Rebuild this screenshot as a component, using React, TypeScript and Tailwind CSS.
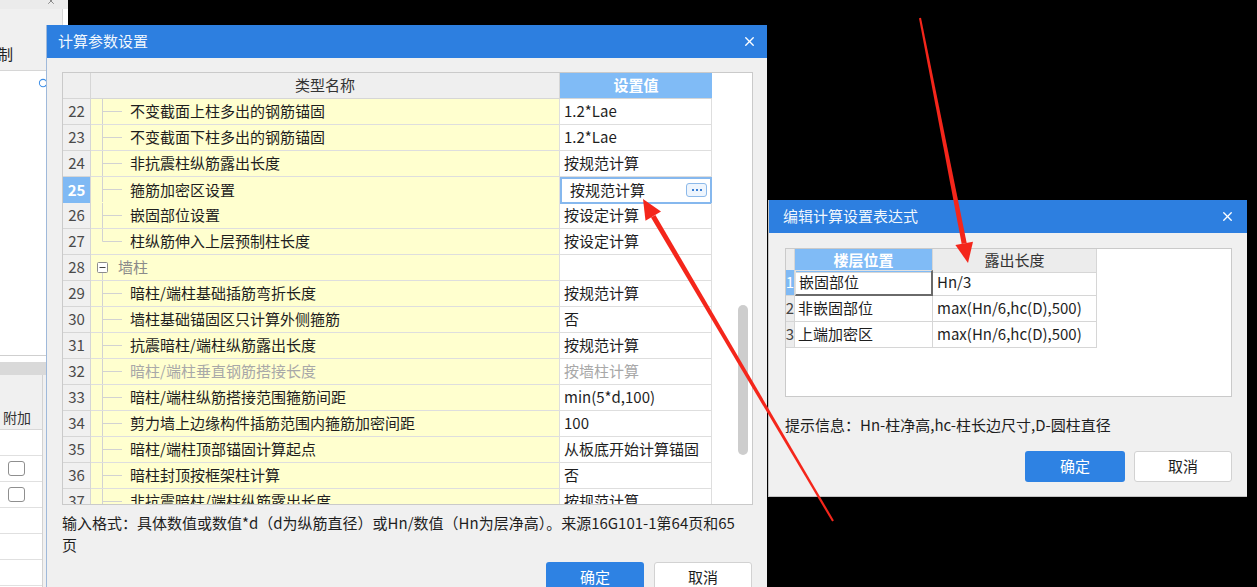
import { X, Search } from 'lucide-react';

type Row = {
  no: number;
  name: string;
  value: string;
  tree: 'mid' | 'end' | 'group';
  active?: boolean;
  muted?: boolean;
};

const params: Row[] = [
  { no: 22, name: '不变截面上柱多出的钢筋锚固', value: '1.2*Lae', tree: 'mid' },
  { no: 23, name: '不变截面下柱多出的钢筋锚固', value: '1.2*Lae', tree: 'mid' },
  { no: 24, name: '非抗震柱纵筋露出长度', value: '按规范计算', tree: 'mid' },
  { no: 25, name: '箍筋加密区设置', value: '按规范计算', tree: 'mid', active: true },
  { no: 26, name: '嵌固部位设置', value: '按设定计算', tree: 'mid' },
  { no: 27, name: '柱纵筋伸入上层预制柱长度', value: '按设定计算', tree: 'end' },
  { no: 28, name: '墙柱', value: '', tree: 'group' },
  { no: 29, name: '暗柱/端柱基础插筋弯折长度', value: '按规范计算', tree: 'mid' },
  { no: 30, name: '墙柱基础锚固区只计算外侧箍筋', value: '否', tree: 'mid' },
  { no: 31, name: '抗震暗柱/端柱纵筋露出长度', value: '按规范计算', tree: 'mid' },
  { no: 32, name: '暗柱/端柱垂直钢筋搭接长度', value: '按墙柱计算', tree: 'mid', muted: true },
  { no: 33, name: '暗柱/端柱纵筋搭接范围箍筋间距', value: 'min(5*d,100)', tree: 'mid' },
  { no: 34, name: '剪力墙上边缘构件插筋范围内箍筋加密间距', value: '100', tree: 'mid' },
  { no: 35, name: '暗柱/端柱顶部锚固计算起点', value: '从板底开始计算锚固', tree: 'mid' },
  { no: 36, name: '暗柱封顶按框架柱计算', value: '否', tree: 'mid' },
  { no: 37, name: '非抗震暗柱/端柱纵筋露出长度', value: '按规范计算', tree: 'mid' },
];

const floors = [
  { no: 1, pos: '嵌固部位', len: 'Hn/3' },
  { no: 2, pos: '非嵌固部位', len: 'max(Hn/6,hc(D),500)' },
  { no: 3, pos: '上端加密区', len: 'max(Hn/6,hc(D),500)' },
];

function TreeMark({ tree }: { tree: Row['tree'] }) {
  if (tree === 'group') {
    return (
      <svg width="23" height="25" className="shrink-0">
        <line x1="11.5" y1="17.5" x2="11.5" y2="25" stroke="#d2d2d2" />
        <rect x="6.5" y="7.5" width="10" height="10" rx="1" fill="#fff" stroke="#8c8c8c" />
        <line x1="8.5" y1="12.5" x2="14.5" y2="12.5" stroke="#444" />
      </svg>
    );
  }
  return (
    <svg width="31" height="25" className="shrink-0">
      <line x1="11.5" y1="0" x2="11.5" y2={tree === 'end' ? 12.5 : 25} stroke="#d2d2d2" />
      <line x1="11.5" y1="12.5" x2="31" y2="12.5" stroke="#d2d2d2" />
    </svg>
  );
}

function BackPanel() {
  return (
    <div className="absolute left-0 top-0 flex h-[587px] w-[68px] flex-col bg-white">
      <div className="flex h-[9px] justify-end overflow-hidden bg-[#ebebeb] pr-[12px]">
        <X size={10} strokeWidth={2} className="-mt-[4px] text-[#777]" />
      </div>
      <div className="h-[62px] w-[63px] border-b border-r border-[#d6d6d6] bg-[#f0f0f0] pt-[37px] text-[15px] leading-[16px] text-[#222]">
        <span className="-ml-[2px]">制</span>
      </div>
      <div className="h-[284px] w-[63px] border-r border-[#d6d6d6] pl-[38px] pt-[7px]">
        <Search size={11} strokeWidth={2.2} className="text-[#3d8fe8]" />
      </div>
      <div className="flex flex-1 flex-col border-t border-[#cfcfcf]">
        <div className="h-[6px]" />
        <div className="h-[13px] bg-[#d9d9d9]" />
        <div className="flex flex-1">
          <div className="flex w-[43px] flex-col border-r border-[#d2d2d2]">
            <div className="h-[30px] bg-[#f0f0f0]" />
            <div className="flex h-[25px] items-center border-b border-[#d8d8d8] bg-[#f0f0f0] pl-[3px] text-[14px] text-[#333]">
              附加
            </div>
            {[false, true, true, false, false, false].map((box, i) => (
              <div key={i} className="flex h-[26px] items-center border-b border-[#e0e0e0] pl-[8px]">
                {box && <div className="h-[15px] w-[17px] rounded-[3px] border border-[#8f8f8f] bg-white" />}
              </div>
            ))}
          </div>
          <div className="flex-1 bg-[#f0f0f0]" />
        </div>
      </div>
    </div>
  );
}

function ParamDialog() {
  return (
    <div className="absolute left-[46px] top-[25px] flex h-[580px] w-[721px] flex-col border-l border-[#9fb9da] bg-[#f0f0f0]">
      <div className="flex h-[33px] items-center justify-between bg-[#2d7fe0] pl-[11px] pr-[10px] text-[15px] text-white/95">
        <span>计算参数设置</span>
        <X size={15} strokeWidth={2.2} className="text-white" />
      </div>
      <div className="flex flex-col pl-[15px] pt-[14px]">
        <div className="flex h-[433px] w-[691px] overflow-hidden border border-[#cacaca] bg-white text-[15px]">
          <div className="w-[649px] shrink-0">
            <div className="grid h-[26px] grid-cols-[28px_469px_152px] border-b border-[#d6d6d6]">
              <div className="border-r border-[#d6d6d6] bg-[#efefef]" />
              <div className="flex items-center justify-center border-r border-[#d6d6d6] bg-[#efefef] text-[#333]">
                类型名称
              </div>
              <div className="flex items-center justify-center bg-[#80bbf6] font-bold text-white">设置值</div>
            </div>
            {params.map((r) => (
              <div key={r.no} className="grid h-[26px] grid-cols-[28px_469px_152px]">
                <div
                  className={`flex items-center justify-center border-b border-r border-[#d6d6d6] ${
                    r.active ? 'bg-[#7fb9f4] font-bold text-white' : 'bg-[#f0f0f0] text-[#4a4a4a]'
                  }`}
                >
                  {r.no}
                </div>
                <div
                  className={`flex items-center border-b border-r border-[#dedede] bg-[#ffffcf] ${
                    r.muted ? 'text-[#a8a8a8]' : r.tree === 'group' ? 'text-[#8a8a8a]' : 'text-[#1e1e1e]'
                  }`}
                >
                  <TreeMark tree={r.tree} />
                  <span className={`${r.tree === 'group' ? 'ml-[4px]' : 'ml-[8px]'} whitespace-nowrap`}>{r.name}</span>
                </div>
                {r.active ? (
                  <div className="flex items-center justify-between border-2 border-[#86b8ee] pl-[8px] pr-[3px] text-[#1e1e1e]">
                    <span>{r.value}</span>
                    <div className="flex h-[14px] w-[21px] items-center justify-center gap-[2px] rounded-[3px] border border-[#8cb9ea] bg-[#eef5fd]">
                      <span className="h-[2px] w-[2px] bg-[#3b7fd4]" />
                      <span className="h-[2px] w-[2px] bg-[#3b7fd4]" />
                      <span className="h-[2px] w-[2px] bg-[#3b7fd4]" />
                    </div>
                  </div>
                ) : (
                  <div
                    className={`flex items-center whitespace-nowrap border-b border-r border-[#dedede] pl-[4px] ${
                      r.muted ? 'text-[#a8a8a8]' : 'text-[#1e1e1e]'
                    }`}
                  >
                    {r.value}
                  </div>
                )}
              </div>
            ))}
          </div>
          <div className="flex-1 pl-[26px] pt-[232px]">
            <div className="h-[150px] w-[10px] rounded-full bg-[#cdcdcd]" />
          </div>
        </div>
        <p className="mt-[7px] text-[15px] leading-[22px] text-[#1e1e1e]">
          <span className="whitespace-nowrap">
            输入格式：具体数值或数值*d（d为纵筋直径）或Hn/数值（Hn为层净高）。来源16G101-1第64页和65
          </span>
          <br />
          页
        </p>
        <div className="mt-[6px] flex justify-end gap-[10px] pr-[15px]">
          <button className="h-[31px] w-[98px] rounded-[3px] bg-[#2e82e3] text-[15px] text-white">确定</button>
          <button className="h-[31px] w-[98px] rounded-[3px] border border-[#d2d2d2] bg-white text-[15px] text-[#1e1e1e]">
            取消
          </button>
        </div>
      </div>
    </div>
  );
}

function ExprDialog() {
  return (
    <div className="absolute left-[768px] top-[200px] flex h-[297px] w-[479px] flex-col border-b border-l border-[#c4c4c4] bg-[#f0f0f0]">
      <div className="flex h-[33px] items-center justify-between bg-[#2d7fe0] pl-[14px] pr-[12px] text-[15px] text-white/95">
        <span>编辑计算设置表达式</span>
        <X size={15} strokeWidth={2.2} className="text-white" />
      </div>
      <div className="flex flex-col pl-[16px] pt-[15px]">
        <div className="h-[149px] w-[447px] border border-[#cacaca] bg-white text-[15px]">
          <div className="grid h-[21px] grid-cols-[9px_138px_164px]">
            <div className="border-b border-r border-[#d6d6d6] bg-[#ececec]" />
            <div className="flex items-center justify-center border-b border-r border-[#d6d6d6] bg-[#80bbf6] font-bold text-white">
              楼层位置
            </div>
            <div className="flex items-center justify-center border-b border-r border-[#d6d6d6] bg-[#ececec] text-[#333]">
              露出长度
            </div>
          </div>
          {floors.map((f) => (
            <div key={f.no} className="grid h-[26px] grid-cols-[9px_138px_164px]">
              <div
                className={`flex items-center justify-center overflow-hidden border-b border-r border-[#d6d6d6] ${
                  f.no === 1 ? 'bg-[#7fb9f4] text-white' : 'bg-[#ececec] text-[#444]'
                }`}
              >
                {f.no}
              </div>
              <div
                className={`flex items-center pl-[3px] text-[#1e1e1e] ${
                  f.no === 1
                    ? 'border-b-2 border-r-2 border-l border-t border-b-[#6a6a6a] border-r-[#6a6a6a] border-l-[#e0e0e0] border-t-[#e0e0e0]'
                    : 'border-b border-r border-[#d6d6d6]'
                }`}
              >
                {f.pos}
              </div>
              <div className="flex items-center whitespace-nowrap border-b border-r border-[#d6d6d6] pl-[4px] text-[#1e1e1e]">
                {f.len}
              </div>
            </div>
          ))}
        </div>
        <p className="mt-[17px] text-[15px] leading-[22px] text-[#1e1e1e]">提示信息：Hn-柱净高,hc-柱长边尺寸,D-圆柱直径</p>
        <div className="mt-[15px] flex justify-end gap-[9px] pr-[15px]">
          <button className="h-[31px] w-[100px] rounded-[3px] bg-[#2e82e3] text-[15px] text-white">确定</button>
          <button className="h-[31px] w-[98px] rounded-[3px] border border-[#d2d2d2] bg-white text-[15px] text-[#1e1e1e]">
            取消
          </button>
        </div>
      </div>
    </div>
  );
}

function Arrows() {
  return (
    <svg width="1257" height="587" className="pointer-events-none absolute left-0 top-0">
      <polygon points="833.9,520.5 832.1,521.5 651,217.5 655.4,214.9" fill="#f4261b" />
      <polygon points="643,199 661,211.6 645.5,220.8" fill="#f4261b" />
      <polygon points="921,17.8 919,18.2 961.7,243.9 966.7,242.9" fill="#f4261b" />
      <polygon points="968,263 973,241.7 955.4,245.1" fill="#f4261b" />
    </svg>
  );
}

export default function App() {
  return (
    <div className="relative h-[587px] w-[1257px] overflow-hidden bg-black font-['Noto_Sans_CJK_SC','Microsoft_YaHei',sans-serif]">
      <BackPanel />
      <ParamDialog />
      <ExprDialog />
      <Arrows />
    </div>
  );
}
